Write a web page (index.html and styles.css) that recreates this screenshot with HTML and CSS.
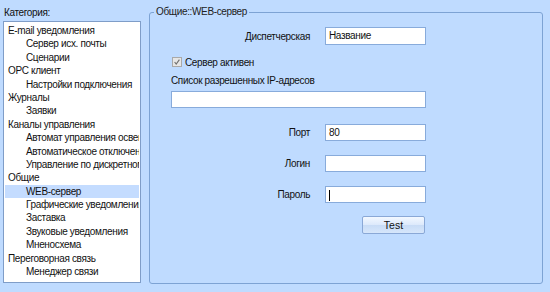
FILE: index.html
```html
<!DOCTYPE html>
<html>
<head>
<meta charset="utf-8">
<title>Настройки</title>
<link rel="stylesheet" href="styles.css">
</head>
<body>
<div class="window">
  <div class="side">
    <div class="side-title">Категория:</div>
    <ul class="tree">
      <li>E-mail уведомления</li>
      <li class="sub">Сервер исх. почты</li>
      <li class="sub">Сценарии</li>
      <li>OPC клиент</li>
      <li class="sub">Настройки подключения</li>
      <li>Журналы</li>
      <li class="sub">Заявки</li>
      <li>Каналы управления</li>
      <li class="sub">Автомат управления освещением</li>
      <li class="sub">Автоматическое отключение</li>
      <li class="sub">Управление по дискретному входу</li>
      <li>Общие</li>
      <li class="sub selected">WEB-сервер</li>
      <li class="sub">Графические уведомления</li>
      <li class="sub">Заставка</li>
      <li class="sub">Звуковые уведомления</li>
      <li class="sub">Мненосхема</li>
      <li>Переговорная связь</li>
      <li class="sub">Менеджер связи</li>
    </ul>
  </div>

  <fieldset class="group">
    <legend>Общие::WEB-сервер</legend>

    <div class="field first">
      <label>Диспетчерская</label>
      <div class="input">Название</div>
    </div>

    <div class="check-row">
      <span class="check">
        <svg width="10" height="10" viewBox="0 0 10 10"><path d="M2 5 L4 7.5 L8 2" fill="none" stroke="#6f6f6f" stroke-width="1.4"/></svg>
      </span>
      Сервер активен
    </div>

    <div class="ip-title">Список разрешенных IP-адресов</div>
    <div class="input wide"></div>

    <div class="field port">
      <label>Порт</label>
      <div class="input">80</div>
    </div>
    <div class="field">
      <label>Логин</label>
      <div class="input"></div>
    </div>
    <div class="field">
      <label>Пароль</label>
      <div class="input"><span class="caret"></span></div>
    </div>

    <div class="actions">
      <button class="btn">Test</button>
    </div>
  </fieldset>
</div>
</body>
</html>
```

FILE: styles.css
```css
html, body {
    margin: 0;
    padding: 0;
    background: #bfdbff;
}
body {
    font-family: "Liberation Sans", Arial, sans-serif;
    font-size: 10px;
    letter-spacing: -0.35px;
    color: #111;
}
.window {
    display: flex;
    align-items: flex-start;
    padding: 6px 0 0 3px;
    width: 550px;
    height: 292px;
    box-sizing: border-box;
}

/* left tree */
.side {
    width: 138px;
}
.side-title {
    line-height: 14px;
    padding-left: 1px;
}
.tree {
    list-style: none;
    margin: 1px 0 0;
    padding: 2px 1px;
    height: 262px;
    box-sizing: border-box;
    background: #fff;
    border: 1px solid #7f9dc8;
    overflow: hidden;
}
.tree li {
    height: 13.4px;
    line-height: 13.4px;
    padding-left: 3px;
    white-space: nowrap;
    overflow: hidden;
    text-overflow: clip;
}
.tree li.sub {
    padding-left: 21px;
}
.tree li.selected {
    background: #c4dcff;
}

/* group box */
.group {
    margin: 0 0 0 8px;
    padding: 0 0 0 21px;
    width: 394px;
    height: 278px;
    box-sizing: border-box;
    border: 1px solid #7da3d4;
    border-radius: 3px;
}
.group legend {
    padding: 0 2px;
    margin-left: -17px;
    line-height: 12px;
    color: #222;
}
.field {
    display: flex;
    align-items: center;
    gap: 15px;
    margin-top: 14px;
}
.field.first {
    margin-top: 9px;
}
.field.port {
    margin-top: 16px;
}
.field label {
    width: 139px;
    text-align: right;
}
.input {
    width: 101px;
    height: 17px;
    box-sizing: border-box;
    background: #fff;
    border: 1px solid #88abdb;
    padding-left: 3px;
    line-height: 15px;
}
.field.first .input {
    height: 18px;
    line-height: 16px;
}
.input.wide {
    width: 255px;
    margin-top: 3px;
}
.caret {
    display: inline-block;
    width: 1px;
    height: 11px;
    background: #000;
    vertical-align: middle;
}
.check-row {
    display: flex;
    align-items: center;
    gap: 3px;
    margin-top: 10px;
    height: 14px;
    padding-left: 1px;
}
.check {
    display: flex;
    width: 10px;
    height: 10px;
    box-sizing: border-box;
    border: 1px solid #a9a9a9;
    background: #e6e6e6;
    align-items: center;
    justify-content: center;
}
.ip-title {
    margin-top: 5px;
    line-height: 14px;
}
.actions {
    display: flex;
    justify-content: flex-end;
    width: 254px;
    margin-top: 13px;
}
.btn {
    width: 63px;
    height: 18px;
    padding: 0;
    font-family: inherit;
    font-size: 10.5px;
    letter-spacing: 0;
    color: #111;
    border: 1px solid #8aa8d6;
    border-radius: 2px;
    background: linear-gradient(#f3f8ff, #dce9fb 50%, #c8dcf6 51%, #d6e6fb);
}
```
